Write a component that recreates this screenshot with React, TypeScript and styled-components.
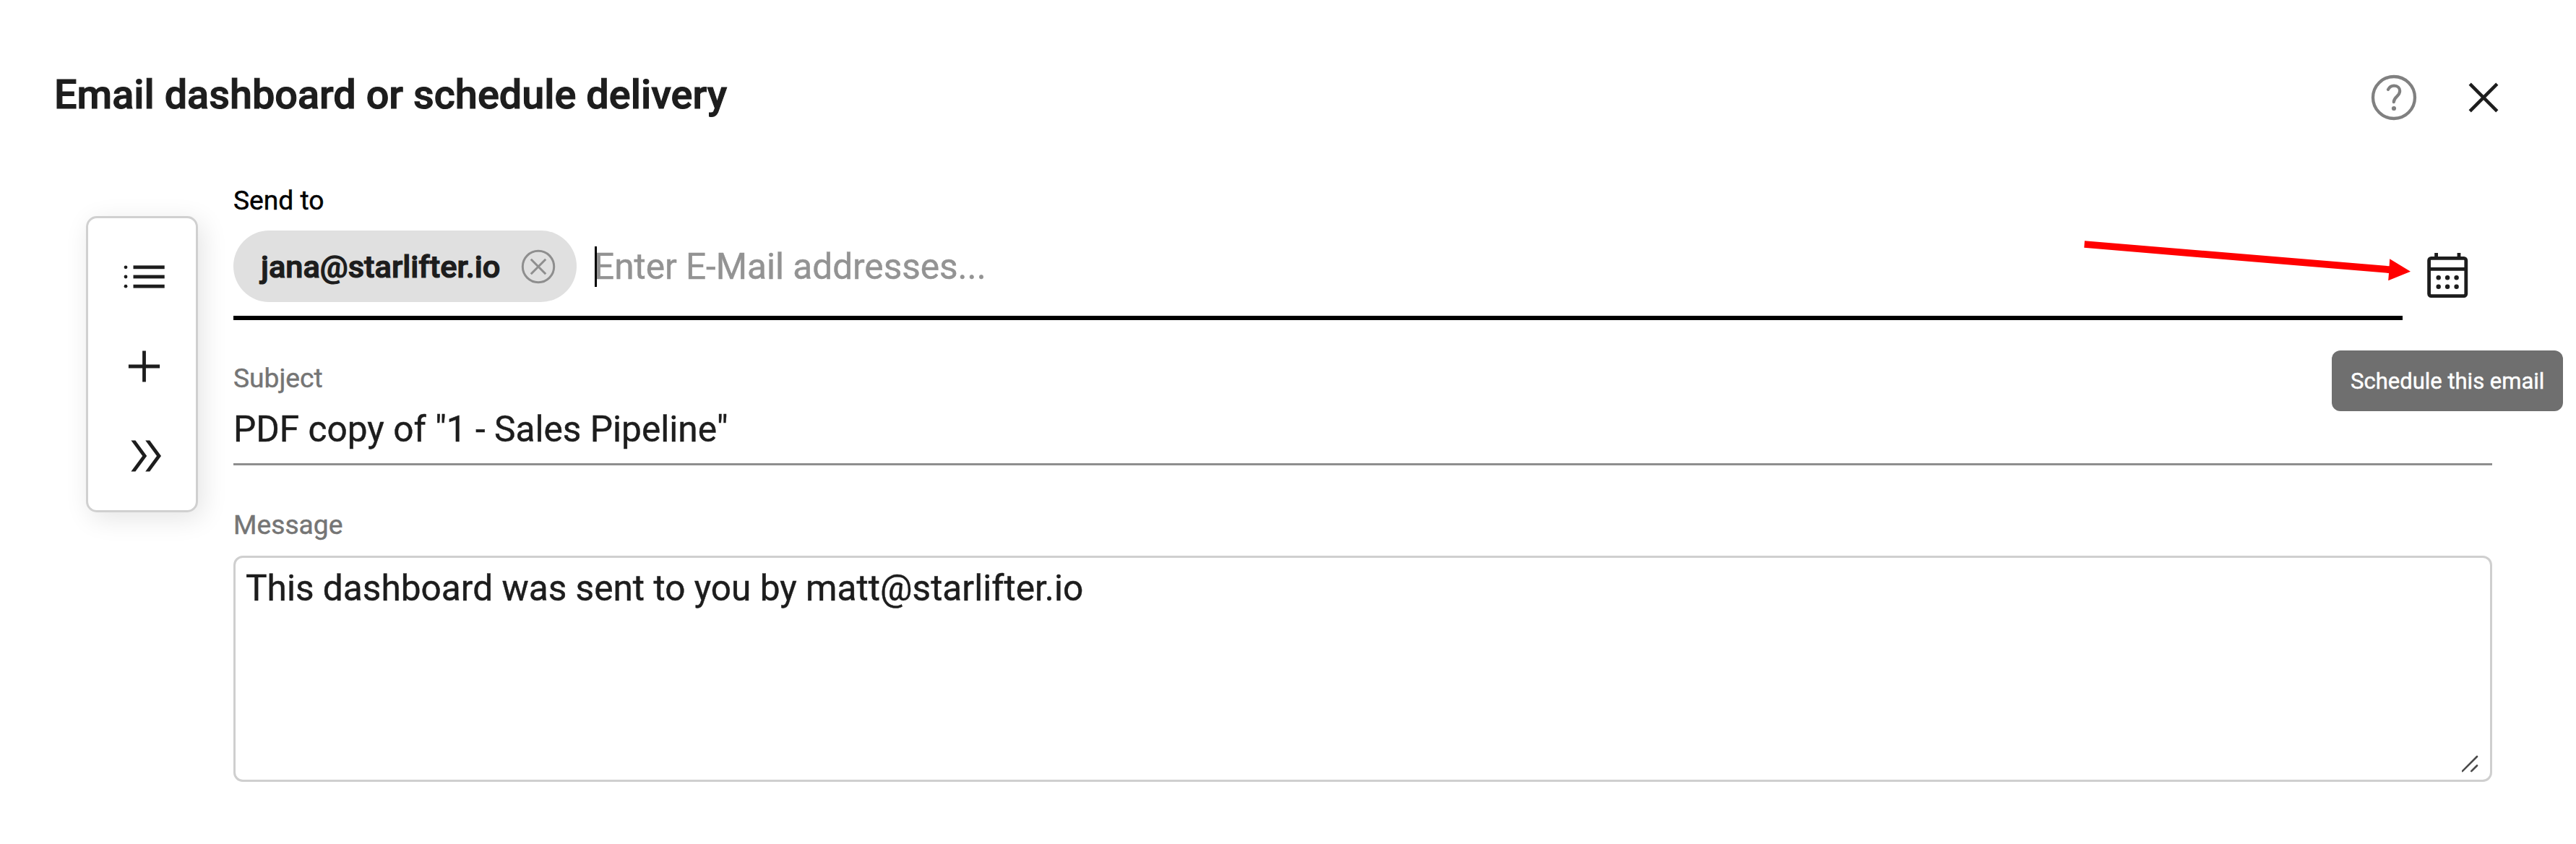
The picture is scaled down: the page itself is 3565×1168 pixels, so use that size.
import React from "react";
import styled, { createGlobalStyle } from "styled-components";

const GlobalStyle = createGlobalStyle`
  *, *::before, *::after { box-sizing: border-box; }
  body {
    margin: 0;
    background: #fff;
    color: #1d1d1d;
    font-family: Roboto, "Liberation Sans", sans-serif;
    -webkit-text-stroke: 0.45px currentColor;
    overflow: hidden;
  }
  svg { display: block; flex: none; }
`;

const Dialog = styled.main`
  position: relative;
  width: 3565px;
  height: 1168px;
  padding-top: 98px;
  background: #fff;
`;

const Header = styled.header`
  display: flex;
  justify-content: space-between;
  align-items: flex-start;
  height: 66px;
  padding: 0 98px 0 75px;
`;

const Title = styled.h1`
  margin: 0;
  font-size: 55.8px;
  line-height: 66px;
  font-weight: 500;
  letter-spacing: 0.02px;
  -webkit-text-stroke-width: 1.1px;
`;

const Actions = styled.div`
  display: flex;
  align-items: center;
  gap: 62px;
  margin-top: 5px;
`;

const IconButton = styled.button<{ $size: number }>`
  display: block;
  width: ${(p) => p.$size}px;
  height: ${(p) => p.$size}px;
  padding: 0;
  border: 0;
  background: none;
  color: inherit;
`;

const Body = styled.div`
  display: flex;
  align-items: flex-start;
  gap: 49px;
  padding-left: 119px;
`;

const Rail = styled.nav`
  display: flex;
  flex-direction: column;
  align-items: center;
  gap: 62px;
  width: 155px;
  height: 410px;
  margin-top: 135px;
  padding-top: 50px;
  border: 3px solid #d0d0d0;
  border-radius: 15px;
  background: #fff;
  box-shadow: 6px 8px 36px rgba(0, 0, 0, 0.11);
`;

const Form = styled.form`
  display: flex;
  flex-direction: column;
  width: 3126px;
  padding-top: 91px;
`;

const SendRow = styled.div`
  display: flex;
  align-items: flex-start;
  gap: 31px;
`;

const Field = styled.div<{ $focused?: boolean; $width?: number }>`
  display: flex;
  flex-direction: column;
  width: ${(p) => (p.$width ? `${p.$width}px` : "100%")};
  border-bottom: ${(p) => (p.$focused ? "6px solid #000" : "3px solid #8e8e8e")};
`;

const Label = styled.label<{ $active?: boolean }>`
  font-size: 37.2px;
  line-height: 44px;
  color: ${(p) => (p.$active ? "#000" : "#757575")};
`;

const Recipients = styled.div`
  display: flex;
  align-items: center;
  height: 99px;
  margin: 20px 0 19px;
`;

const Chip = styled.span`
  display: flex;
  align-items: center;
  gap: 28px;
  width: 475px;
  height: 99px;
  padding-left: 38px;
  border-radius: 50px;
  background: #e0e0e0;
  font-size: 43.4px;
  font-weight: 500;
  line-height: 52px;
  white-space: nowrap;
`;

const ChipText = styled.span`
  padding-top: 2px;
  -webkit-text-stroke-width: 1.2px;
`;

const Caret = styled.span`
  width: 3px;
  height: 56px;
  margin: 0 -4px 0 25px;
  background: #000;
  z-index: 1;
`;

const Placeholder = styled.span`
  font-size: 49.6px;
  line-height: 60px;
  letter-spacing: -0.04px;
  color: #939393;
`;

const CalendarButton = styled(IconButton)`
  margin-top: 91px;
`;

const SubjectField = styled(Field)`
  margin-top: 58px;
`;

const Value = styled.div`
  margin: 19px 0 17px;
  font-size: 49.6px;
  line-height: 60px;
`;

const MessageField = styled.div`
  display: flex;
  flex-direction: column;
  gap: 21px;
  margin-top: 60px;
`;

const MessageBox = styled.div`
  display: flex;
  justify-content: space-between;
  height: 313px;
  padding: 12px 15px 10px 14px;
  border: 3px solid #cfcfcf;
  border-radius: 13px;
  font-size: 49.6px;
  line-height: 60px;
`;

const Grip = styled.svg`
  align-self: flex-end;
`;

const Tooltip = styled.div`
  position: absolute;
  left: 3227px;
  top: 485px;
  width: 320px;
  height: 84px;
  padding-left: 26px;
  border-radius: 12px;
  background: #6f6f6f;
  color: #fff;
  font-size: 31px;
  line-height: 86px;
  white-space: nowrap;
`;

const Arrow = styled.svg`
  position: absolute;
  left: 2880px;
  top: 325px;
`;

const HelpIcon = () => (
  <svg width="64" height="64" viewBox="0 0 64 64" fill="none" stroke="#808080">
    <circle cx="32" cy="32" r="29" strokeWidth="4.3" />
    <path
      d="M24 20.9C25.8 17.4 28.6 15.6 32.2 15.6C37.2 15.6 40.2 18.8 40.2 22.8C40.2 30.6 32 30.6 31.8 38.2"
      strokeWidth="4.2"
      strokeLinecap="round"
      strokeLinejoin="round"
    />
    <circle cx="32" cy="47" r="3.1" fill="#808080" stroke="none" />
  </svg>
);

const CloseIcon = () => (
  <svg width="60" height="60" viewBox="0 0 60 60" stroke="#1d1d1d" strokeWidth="4.6">
    <path d="M11.2 11.2L48.8 48.8M48.8 11.2L11.2 48.8" />
  </svg>
);

const ListIcon = () => (
  <svg width="62" height="62" viewBox="0 0 62 62" fill="#1d1d1d">
    {[17.8, 31, 44.2].map((y) => (
      <React.Fragment key={y}>
        <circle cx="8" cy={y} r="2.4" />
        <rect x="18.5" y={y - 2.4} width="43.2" height="4.8" />
      </React.Fragment>
    ))}
  </svg>
);

const PlusIcon = () => (
  <svg width="62" height="62" viewBox="0 0 62 62" stroke="#1d1d1d" strokeWidth="4.8">
    <path d="M11.9 31H55.1M33.5 9.4V52.6" />
  </svg>
);

const ExpandIcon = () => (
  <svg width="62" height="62" viewBox="0 0 62 62" fill="#1d1d1d">
    <path d="M15.4 9.4H21.4L37.2 31L21.4 52.6H15.4L31.2 31Z" />
    <path d="M35.2 9.4H41.2L57 31L41.2 52.6H35.2L51 31Z" />
  </svg>
);

const RemoveIcon = () => (
  <svg width="50" height="50" viewBox="0 0 50 50" fill="none" stroke="#8e8e8e" strokeWidth="3">
    <circle cx="25" cy="25" r="21.7" />
    <path d="M14.8 14.8L35.2 35.2M35.2 14.8L14.8 35.2" />
  </svg>
);

const CalendarIcon = () => (
  <svg width="62" height="70" viewBox="0 0 62 70" fill="none" stroke="#1d1d1d" strokeWidth="4.8">
    <rect x="5.6" y="11.4" width="51.2" height="52.2" rx="3" />
    <path d="M5.6 26.3H56.8M15.6 4V11M47 4V11" />
    <g fill="#1d1d1d" stroke="none">
      {[38.3, 50.8].map((y) =>
        [18.7, 31.1, 43.6].map((x) => <circle key={`${x}-${y}`} cx={x} cy={y} r="3.2" />)
      )}
    </g>
  </svg>
);

export default function App() {
  return (
    <Dialog>
      <GlobalStyle />
      <Header>
        <Title>Email dashboard or schedule delivery</Title>
        <Actions>
          <IconButton $size={64} type="button"><HelpIcon /></IconButton>
          <IconButton $size={60} type="button"><CloseIcon /></IconButton>
        </Actions>
      </Header>
      <Body>
        <Rail>
          <IconButton $size={62} type="button"><ListIcon /></IconButton>
          <IconButton $size={62} type="button"><PlusIcon /></IconButton>
          <IconButton $size={62} type="button"><ExpandIcon /></IconButton>
        </Rail>
        <Form>
          <SendRow>
            <Field $focused $width={3002}>
              <Label $active>Send to</Label>
              <Recipients>
                <Chip>
                  <ChipText>jana@starlifter.io</ChipText>
                  <RemoveIcon />
                </Chip>
                <Caret />
                <Placeholder>Enter E-Mail addresses...</Placeholder>
              </Recipients>
            </Field>
            <CalendarButton $size={62} type="button"><CalendarIcon /></CalendarButton>
          </SendRow>
          <SubjectField>
            <Label>Subject</Label>
            <Value>PDF copy of "1 - Sales Pipeline"</Value>
          </SubjectField>
          <MessageField>
            <Label>Message</Label>
            <MessageBox>
              This dashboard was sent to you by matt@starlifter.io
              <Grip width="24" height="24" viewBox="0 0 24 24" stroke="#4a4a4a" strokeWidth="2.6" strokeLinecap="round">
                <path d="M0.8 22.2L21 2M13.3 22.2L21 14.5" />
              </Grip>
            </MessageBox>
          </MessageField>
        </Form>
      </Body>
      <Tooltip>Schedule this email</Tooltip>
      <Arrow width="460" height="70" viewBox="0 0 460 70" fill="#ff0000">
        <path d="M5 8.2L426.6 43.3L427.2 33.3L456 50.7L425.2 63.3L426 53L4.3 17.8Z" />
      </Arrow>
    </Dialog>
  );
}
